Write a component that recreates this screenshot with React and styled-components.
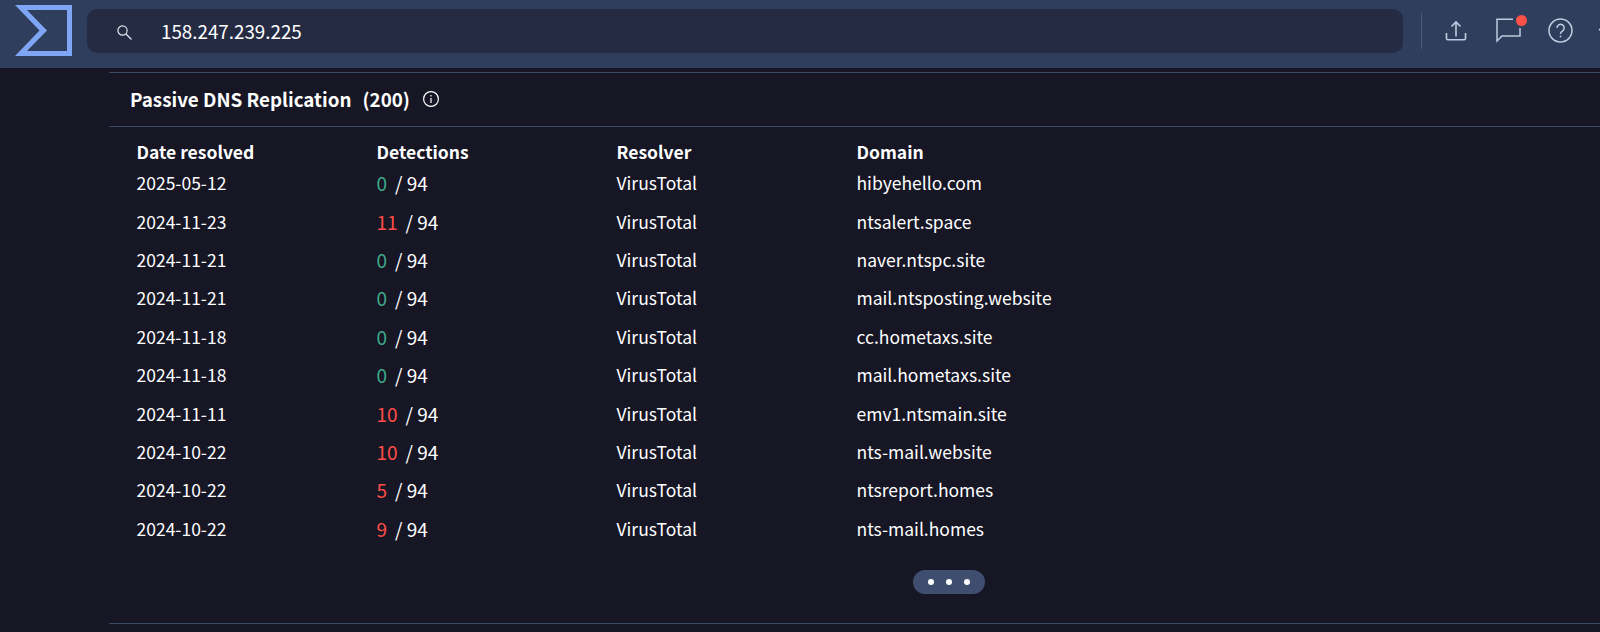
import React from 'react';
import styled, { createGlobalStyle } from 'styled-components';

const GlobalStyle = createGlobalStyle`
  html, body {
    margin: 0;
    height: 100%;
    overflow: hidden;
    background: #161625;
    color: #fff;
    font-family: "Noto Sans CJK JP", "Noto Sans", sans-serif;
  }
`;

const Navbar = styled.header`
  height: 68px;
  background: #2e3e5c;
  display: flex;
  align-items: center;
  padding-left: 15px;
  overflow: hidden;
`;

const Logo = styled.svg`
  width: 58px;
  height: 52px;
  flex: none;
  align-self: flex-start;
  margin-top: 5px;
`;

const SearchBox = styled.div`
  width: 1316px;
  height: 44px;
  margin-left: 14px;
  margin-top: -6px;
  background: #252b43;
  border-radius: 10px;
  display: flex;
  align-items: center;
  padding-left: 30px;
  box-sizing: border-box;
  flex: none;
`;

const SearchIcon = styled.svg`
  width: 15px;
  height: 15px;
  margin-top: 2px;
`;

const SearchText = styled.span`
  margin: 0 0 2px 29px;
  font-size: 18.8px;
  color: #fff;
`;

const Divider = styled.div`
  width: 1px;
  height: 36px;
  margin-left: 18px;
  margin-top: -6px;
  background: #4b5b7c;
  flex: none;
`;

const IconButton = styled.div`
  position: relative;
  width: 26px;
  height: 26px;
  flex: none;
  margin-left: ${props => props.$gap}px;
  margin-top: -6px;
`;

const Badge = styled.span`
  position: absolute;
  top: -3px;
  right: -5px;
  width: 11px;
  height: 11px;
  border-radius: 50%;
  background: #ff5148;
`;

const Content = styled.main`
  margin-left: 109px;
  padding-top: 4px;
`;

const Section = styled.section`
  border-top: 1px solid #3b4863;
  border-bottom: 1px solid #3b4863;
  height: 552px;
  box-sizing: border-box;
`;

const SectionHeader = styled.div`
  height: 54px;
  border-bottom: 1px solid #3b4863;
  display: flex;
  align-items: center;
  padding: 0 0 2px 21px;
  box-sizing: border-box;
`;

const Title = styled.h2`
  margin: 0;
  font-size: 18.8px;
  font-weight: 700;
`;

const Count = styled.span`
  margin-left: 11px;
`;

const InfoIcon = styled.svg`
  width: 18px;
  height: 18px;
  margin-left: 12.5px;
`;

const Table = styled.div`
  padding: 12px 0 0 27.5px;
`;

const Row = styled.div`
  display: grid;
  grid-template-columns: repeat(4, 240px);
  height: ${props => (props.$head ? 24.5 : 38.4)}px;
  align-items: center;
  font-size: 17.5px;
  font-weight: ${props => (props.$head ? 700 : 400)};
`;

const DetectionCell = styled.span`
  font-size: 19px;
  line-height: 1;
`;

const Score = styled.span`
  color: ${props => (props.$bad ? '#ff4d47' : '#3fa98a')};
  margin-right: 8px;
`;

const MoreRow = styled.div`
  display: flex;
  margin: 22.5px 0 0 776.5px;
`;

const MorePill = styled.div`
  width: 72px;
  height: 24px;
  border-radius: 12px;
  background: #3f4d6e;
  display: flex;
  align-items: center;
  justify-content: center;
  gap: 12px;
`;

const Dot = styled.span`
  width: 6px;
  height: 6px;
  border-radius: 50%;
  background: #fff;
`;

const rows = [
  ['2025-05-12', 0, 'hibyehello.com'],
  ['2024-11-23', 11, 'ntsalert.space'],
  ['2024-11-21', 0, 'naver.ntspc.site'],
  ['2024-11-21', 0, 'mail.ntsposting.website'],
  ['2024-11-18', 0, 'cc.hometaxs.site'],
  ['2024-11-18', 0, 'mail.hometaxs.site'],
  ['2024-11-11', 10, 'emv1.ntsmain.site'],
  ['2024-10-22', 10, 'nts-mail.website'],
  ['2024-10-22', 5, 'ntsreport.homes'],
  ['2024-10-22', 9, 'nts-mail.homes'],
];

export default function App() {
  return (
    <>
      <GlobalStyle />
      <Navbar>
        <Logo viewBox="0 0 58 52">
          <path fillRule="evenodd" fill="#7fa5f5" d="M0 0H57V51H0L24.5 25.5ZM12 5L32 25.5L12 46H52V5Z" />
        </Logo>
        <SearchBox>
          <SearchIcon viewBox="0 0 15 15" fill="none" stroke="#e4e8f0" strokeWidth="1.2">
            <circle cx="5.5" cy="5.5" r="4.6" />
            <path d="M9 9l5.5 5.5" />
          </SearchIcon>
          <SearchText>158.247.239.225</SearchText>
        </SearchBox>
        <Divider />
        <IconButton $gap={21}>
          <svg width="26" height="26" viewBox="0 0 26 26" fill="none" stroke="#bfcbe0" strokeWidth="1.6">
            <path d="M13 18.5V4M8.5 8.5L13 4l4.5 4.5" />
            <path d="M3.5 15v5.5c0 .8.5 1.3 1.3 1.3h16.4c.8 0 1.3-.5 1.3-1.3V15" />
          </svg>
        </IconButton>
        <IconButton $gap={27}>
          <svg width="26" height="26" viewBox="0 0 26 26" fill="none" stroke="#bfcbe0" strokeWidth="1.5">
            <path d="M17 1.3H1V23L6 18H24V10" />
          </svg>
          <Badge />
        </IconButton>
        <IconButton $gap={26}>
          <svg width="26" height="26" viewBox="0 0 26 26" fill="none" stroke="#bfcbe0" strokeWidth="1.5">
            <circle cx="12.5" cy="12.5" r="11.5" />
            <path d="M9 10a3.6 3.6 0 1 1 5.5 3c-1.3.9-2 1.3-2 3" />
            <path d="M12.5 17.6v1.8" />
          </svg>
        </IconButton>
        <IconButton $gap={24}>
          <svg width="26" height="26" viewBox="0 0 26 26" fill="none" stroke="#bfcbe0" strokeWidth="1.5">
            <path d="M1 11l5 5 5-5" />
          </svg>
        </IconButton>
      </Navbar>
      <Content>
        <Section>
          <SectionHeader>
            <Title>Passive DNS Replication<Count>(200)</Count></Title>
            <InfoIcon viewBox="0 0 18 18" fill="none" stroke="#fff" strokeWidth="1.2">
              <circle cx="9" cy="9" r="7.4" />
              <path d="M9 8v5M9 5v1.4" />
            </InfoIcon>
          </SectionHeader>
          <Table>
            <Row $head>
              <span>Date resolved</span>
              <span>Detections</span>
              <span>Resolver</span>
              <span>Domain</span>
            </Row>
            {rows.map((row, i) => (
              <Row key={i}>
                <span>{row[0]}</span>
                <DetectionCell>
                  <Score $bad={row[1] > 0}>{row[1]}</Score>/ 94
                </DetectionCell>
                <span>VirusTotal</span>
                <span>{row[2]}</span>
              </Row>
            ))}
            <MoreRow>
              <MorePill>
                <Dot />
                <Dot />
                <Dot />
              </MorePill>
            </MoreRow>
          </Table>
        </Section>
      </Content>
    </>
  );
}
